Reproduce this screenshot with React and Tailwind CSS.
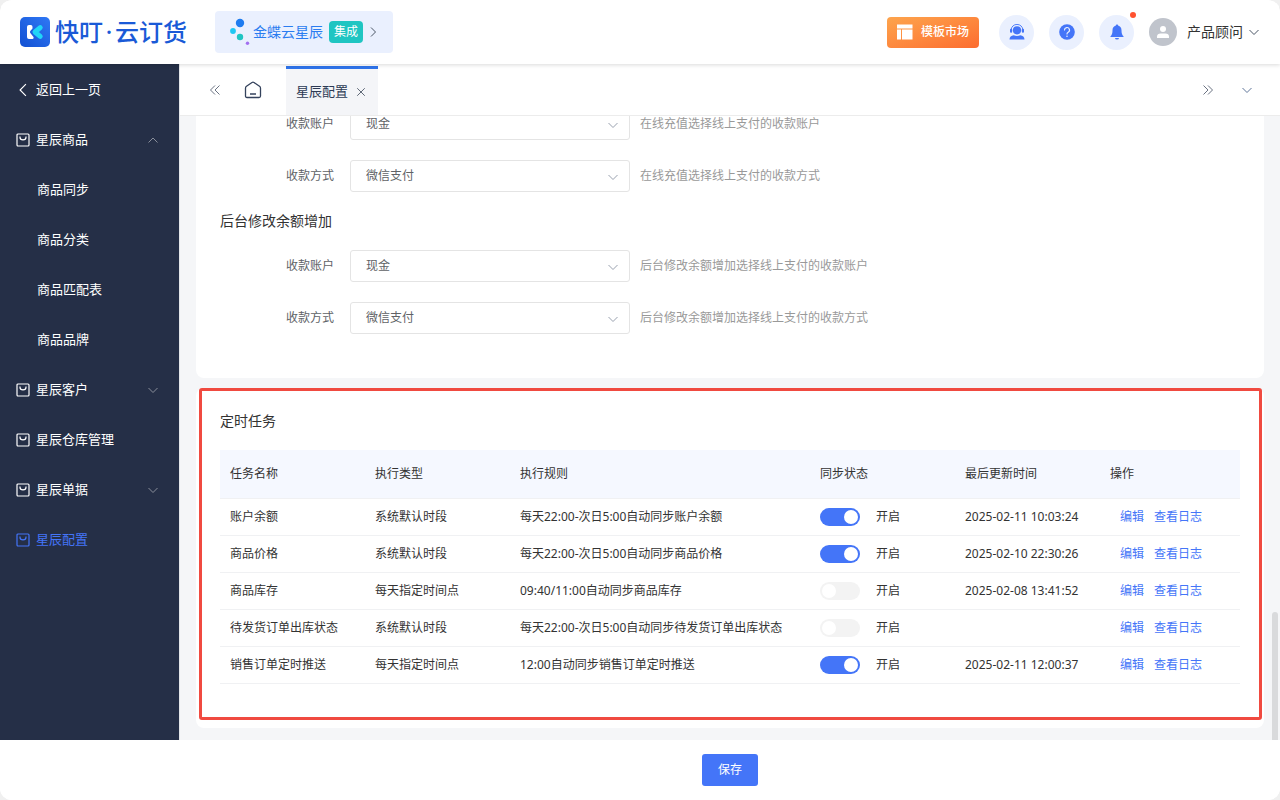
import { useState } from 'react';
import { X } from 'lucide-react';

const menu = [
  { label: '星辰商品', open: true, children: ['商品同步', '商品分类', '商品匹配表', '商品品牌'] },
  { label: '星辰客户', open: false, children: [] },
  { label: '星辰仓库管理' },
  { label: '星辰单据', open: false, children: [] },
  { label: '星辰配置', active: true },
];

const initialTasks = [
  { name: '账户余额', type: '系统默认时段', rule: '每天22:00-次日5:00自动同步账户余额', on: true, time: '2025-02-11 10:03:24' },
  { name: '商品价格', type: '系统默认时段', rule: '每天22:00-次日5:00自动同步商品价格', on: true, time: '2025-02-10 22:30:26' },
  { name: '商品库存', type: '每天指定时间点', rule: '09:40/11:00自动同步商品库存', on: false, time: '2025-02-08 13:41:52' },
  { name: '待发货订单出库状态', type: '系统默认时段', rule: '每天22:00-次日5:00自动同步待发货订单出库状态', on: false, time: '' },
  { name: '销售订单定时推送', type: '每天指定时间点', rule: '12:00自动同步销售订单定时推送', on: true, time: '2025-02-11 12:00:37' },
];

const chevrons = {
  down: 'M1.5 4L6 8.5 10.500 4',
  up: 'M1.5 8.5L6 4l4.5 4.5',
  left: 'M8.5 1l-5 5 5 5',
  right: 'M4 1.5L8.5 6 4 10.5',
  doubleLeft: 'M6 1.5L1.5 6 6 10.5M10.5 1.5L6 6l4.5 4.5',
  doubleRight: 'M1.5 1.5L6 6l-4.5 4.5M6 1.5L10.5 6 6 10.5',
};

function Chevron({ dir, className }) {
  return (
    <svg viewBox="0 0 12 12" className={className} fill="none" stroke="currentColor" strokeWidth="1" aria-hidden="true">
      <path d={chevrons[dir]} />
    </svg>
  );
}

function Logo() {
  return (
    <svg viewBox="0 0 30 30" className="h-[30px] w-[30px]" aria-hidden="true">
      <defs>
        <linearGradient id="logoBg" x1="0" y1="1" x2="1" y2="0">
          <stop offset="0" stopColor="#1250d2" />
          <stop offset="1" stopColor="#2f78f5" />
        </linearGradient>
      </defs>
      <rect width="30" height="30" rx="5" fill="url(#logoBg)" />
      <path d="M9 8h1.8q1.7 0 1.7 1.7v1.8L10.3 14q-.7 1 0 2l3.2 4q.7 1.500-.8 2H9q-2 0-2-2V10q0-2 2-2z" fill="#fff" />
      <path d="M20.2 10.6L15 15l5.200 4.4" fill="none" stroke="#20d5f8" strokeWidth="5" strokeLinecap="round" strokeLinejoin="round" />
    </svg>
  );
}

function BagIcon() {
  return (
    <svg viewBox="0 0 14 14" className="h-3.5 w-3.5 shrink-0" fill="none" stroke="currentColor" strokeWidth="1.2" aria-hidden="true">
      <rect x="1" y="1" width="12" height="12" rx="1" />
      <path d="M4 3.6v.6a3 2.6 0 0 0 6 0v-.6" />
    </svg>
  );
}

function Header() {
  return (
    <header className="relative z-10 flex h-16 shrink-0 items-center bg-white px-5 shadow-[0_1px_4px_rgba(0,0,0,0.15)]">
      <div className="flex items-center gap-[5px]">
        <Logo />
        <span className="flex items-center text-2xl leading-8 font-medium text-[#1a5ad7]">
          快叮<span className="w-3 text-center">·</span>云订货
        </span>
      </div>

      <button type="button" className="ml-7 flex h-[42px] items-center rounded bg-[#eaf0fe] px-3.5 text-sm text-[#2a7cf0]">
        <svg viewBox="0 0 24 30" className="h-[30px] w-6" aria-hidden="true">
          <circle cx="11" cy="6" r="4.2" fill="#1f7cf0" />
          <circle cx="4" cy="14" r="2.9" fill="#1fc7f3" />
          <circle cx="11" cy="20" r="3.2" fill="#20c5c3" />
          <circle cx="18.5" cy="26.3" r="1.7" fill="#a26ff0" />
        </svg>
        <span>金蝶云星辰</span>
        <span className="ml-1.5 flex h-[22px] items-center rounded bg-[#1fc5c2] px-[5px] text-xs text-white">集成</span>
        <Chevron dir="right" className="ml-1 h-3 w-3 text-gray-600" />
      </button>

      <div className="ml-auto flex items-center">
        <button type="button" className="flex h-[31px] items-center gap-2 rounded bg-linear-to-br from-[#fda44d] to-[#fc6c2f] px-2.5 text-xs font-medium text-white">
          <svg viewBox="0 0 16 16" className="h-4 w-4" fill="currentColor" aria-hidden="true">
            <path d="M0 .5h15.5v4H0zM0 5.5h4v10H0zM5 5.5h10.5v10H5z" />
          </svg>
          模板市场
        </button>

        <div className="ml-5 flex items-center gap-[15px] text-[#4475f8]">
          <button type="button" aria-label="客服" className="flex h-[35px] w-[35px] items-center justify-center rounded-full bg-[#eaf0fe]">
            <svg viewBox="0 0 16 16" className="h-4 w-4" fill="currentColor" aria-hidden="true">
              <circle cx="8" cy="6.3" r="4.1" />
              <path d="M2.2 5.8a5.8 5.4 0 0 1 11.6 0" fill="none" stroke="currentColor" strokeWidth=".9" />
              <rect x="1" y="4.8" width="2.2" height="4" rx="1" />
              <rect x="12.8" y="4.8" width="2.2" height="4" rx="1" />
              <path d="M.5 15.5c0-2.8 1.7-4 4.2-4.300 2 1 4.6 1 6.6 0 2.5.3 4.2 1.5 4.2 4.300z" />
            </svg>
          </button>
          <button type="button" aria-label="帮助" className="flex h-[35px] w-[35px] items-center justify-center rounded-full bg-[#eaf0fe]">
            <svg viewBox="0 0 16 16" className="h-4 w-4" aria-hidden="true">
              <circle cx="8" cy="8" r="7.8" fill="currentColor" />
              <path d="M5.5 6a2.5 2.5 0 1 1 3.7 2.2c-.9.5-1.2.9-1.2 1.8" fill="none" stroke="#eaf0fe" strokeWidth="1.2" strokeLinecap="round" />
              <circle cx="8" cy="12.2" r=".8" fill="#eaf0fe" />
            </svg>
          </button>
          <button type="button" aria-label="通知" className="relative flex h-[35px] w-[35px] items-center justify-center rounded-full bg-[#eaf0fe]">
            <svg viewBox="0 0 16 16" className="h-4 w-4" fill="currentColor" aria-hidden="true">
              <path d="M8 .5c.7 0 1.1.5 1.1 1.1 2.2.6 3.4 2.3 3.4 4.6 0 3 .5 4.6 2 6v.8h-13v-.8c1.5-1.4 2-3 2-6 0-2.3 1.2-4 3.4-4.6C6.9 1 7.3.5 8 .5zM6 14h4a2 1.6 0 0 1-4 0z" />
            </svg>
            <span className="absolute -right-0.5 -top-[3px] h-1.5 w-1.5 rounded-full bg-[#ff5230]" />
          </button>
        </div>

        <button type="button" className="ml-[15px] flex items-center text-sm text-[#333]">
          <span className="mr-2.5 flex h-7 w-7 items-center justify-center rounded-full bg-[#c0c4cc]">
            <svg viewBox="0 0 14 14" className="h-3.5 w-3.5" fill="#fff" aria-hidden="true">
              <circle cx="7" cy="4" r="3" />
              <path d="M1 13v-1.500C1 9.500 2.500 8.500 4.500 8.500h5c2 0 3.500 1 3.500 3V13z" />
            </svg>
          </span>
          产品顾问
          <Chevron dir="down" className="ml-[5px] h-3 w-3 text-gray-600" />
        </button>
      </div>
    </header>
  );
}

function Sidebar() {
  return (
    <aside className="w-[179px] shrink-0 overflow-hidden bg-[#252f47] pt-px text-[13px] text-white">
      <a href="#back" className="flex h-[50px] items-center gap-1.5 pl-4">
        <Chevron dir="left" className="h-3.5 w-3.5" />
        返回上一页
      </a>
      <nav>
        {menu.map((item) => (
          <div key={item.label}>
            <a href="#menu" className={item.active ? 'flex h-[50px] items-center gap-1.5 pl-4 pr-5 text-[#4475f8]' : 'flex h-[50px] items-center gap-1.5 pl-4 pr-5'}>
              <BagIcon />
              {item.label}
              {item.children && <Chevron dir={item.open ? 'up' : 'down'} className="ml-auto h-3 w-3 text-[#8a8f9b]" />}
            </a>
            {item.open && item.children.map((child) => (
              <a key={child} href="#child" className="flex h-[50px] items-center pl-[37px]">{child}</a>
            ))}
          </div>
        ))}
      </nav>
    </aside>
  );
}

function TabBar() {
  return (
    <div className="flex h-[52px] shrink-0 items-center border-b border-[#ececec] bg-white pr-[27px] pl-[29px]">
      <button type="button" aria-label="向左" className="text-gray-500">
        <Chevron dir="doubleLeft" className="h-3 w-3" />
      </button>
      <button type="button" aria-label="首页" className="ml-[23px] text-[#34425c]">
        <svg viewBox="0 0 18 18" className="h-[18px] w-[18px]" fill="none" stroke="currentColor" strokeWidth="1.3" strokeLinejoin="round" aria-hidden="true">
          <path d="M1.5 7.2Q1.5 6 2.5 5.3L8 1.5q1-.6 2 0l5.5 3.8q1 .7 1 1.9V15q0 1.5-1.5 1.5H3q-1.500 0-1.500-1.500z" />
          <path d="M6 13h6" />
        </svg>
      </button>
      <div className="ml-6 flex h-[49px] items-center gap-1.5 self-end border-t-[3px] border-[#2f74ea] bg-[#f4f5f8] px-2.5 text-[13px] text-[#2c3a55]">
        星辰配置
        <button type="button" aria-label="关闭" className="text-gray-600">
          <X className="h-3.5 w-3.5" strokeWidth={1.5} />
        </button>
      </div>
      <button type="button" aria-label="向右" className="ml-auto text-gray-500">
        <Chevron dir="doubleRight" className="h-3 w-3" />
      </button>
      <button type="button" aria-label="更多" className="ml-[27px] text-[#60769a]">
        <Chevron dir="down" className="h-3 w-3" />
      </button>
    </div>
  );
}

function SelectRow({ id, label, value, hint }) {
  return (
    <div className="flex h-8 items-center text-xs">
      <label htmlFor={id} className="mr-4 w-[114px] text-right text-[#606266]">{label}</label>
      <div className="relative">
        <select id={id} defaultValue={value} className="h-8 w-[280px] appearance-none rounded-[3px] border border-[#e4e4e4] bg-white pl-[15px] text-[#606266]">
          <option>{value}</option>
        </select>
        <Chevron dir="down" className="pointer-events-none absolute right-[11px] top-[11px] h-3 w-3 text-gray-400" />
      </div>
      <span className="ml-2.5 text-[#999]">{hint}</span>
    </div>
  );
}

function TaskTable() {
  const [tasks, setTasks] = useState(initialTasks);

  const toggle = (name) => {
    setTasks(tasks.map((t) => (t.name === name ? { ...t, on: !t.on } : t)));
  };

  return (
    <table className="mt-[19px] w-full table-fixed text-left text-xs text-[#333]">
      <thead>
        <tr className="h-12 border-b border-[#f0f1f3] bg-[#f5f8ff]">
          <th className="w-[145px] px-2.5 font-normal">任务名称</th>
          <th className="w-[145px] px-2.5 font-normal">执行类型</th>
          <th className="px-2.5 font-normal">执行规则</th>
          <th className="w-[145px] px-2.5 font-normal">同步状态</th>
          <th className="w-[145px] px-2.5 font-normal">最后更新时间</th>
          <th className="w-[140px] px-2.5 font-normal">操作</th>
        </tr>
      </thead>
      <tbody>
        {tasks.map((task) => (
          <tr key={task.name} className="h-[37px] border-b border-[#f0f1f3] whitespace-nowrap">
            <td className="px-2.5">{task.name}</td>
            <td className="px-2.5">{task.type}</td>
            <td className="px-2.5">{task.rule}</td>
            <td className="px-2.5">
              <label className="flex items-center gap-4">
                <input
                  type="checkbox"
                  role="switch"
                  checked={task.on}
                  onChange={() => toggle(task.name)}
                  className="flex h-[18px] w-10 appearance-none items-center rounded-full bg-[#f3f3f3] px-0.5 before:h-3.5 before:w-3.5 before:rounded-full before:bg-white checked:justify-end checked:bg-[#4475f8]"
                />
                开启
              </label>
            </td>
            <td className="px-2.5">{task.time}</td>
            <td className="px-5 text-[#4475f8]">
              <div className="flex gap-2.5">
                <a href="#edit">编辑</a>
                <a href="#log">查看日志</a>
              </div>
            </td>
          </tr>
        ))}
      </tbody>
    </table>
  );
}

export default function App() {
  return (
    <div className="h-screen bg-[#f0f0f0]">
      <div className="flex h-full flex-col overflow-hidden rounded-xl bg-white font-['Noto_Sans','Noto_Sans_CJK_SC',sans-serif]">
        <Header />
        <div className="flex min-h-0 flex-1">
          <Sidebar />
          <div className="flex min-w-0 flex-1 flex-col border-l border-[#e4e6ea] bg-[#f5f6f8]">
            <TabBar />
            <main className="relative min-h-0 flex-1 overflow-hidden px-4">
              {/* content sits slightly scrolled under the tab bar */}
              <section className="-mt-2 rounded-b-lg bg-white px-6 pb-11">
                <div className="flex flex-col gap-5">
                  <SelectRow id="rechargeAccount" label="收款账户" value="现金" hint="在线充值选择线上支付的收款账户" />
                  <SelectRow id="rechargeMethod" label="收款方式" value="微信支付" hint="在线充值选择线上支付的收款方式" />
                </div>
                <h2 className="my-[19px] text-sm leading-5 text-[#333]">后台修改余额增加</h2>
                <div className="flex flex-col gap-5">
                  <SelectRow id="balanceAccount" label="收款账户" value="现金" hint="后台修改余额增加选择线上支付的收款账户" />
                  <SelectRow id="balanceMethod" label="收款方式" value="微信支付" hint="后台修改余额增加选择线上支付的收款方式" />
                </div>
              </section>

              <section className="relative mt-2.5 rounded-lg bg-white px-6 pb-11 pt-[23px]">
                <h2 className="text-sm leading-5 text-[#333]">定时任务</h2>
                <TaskTable />
                {/* highlight frame */}
                <div className="pointer-events-none absolute bottom-2 left-[3px] right-0.5 top-0 rounded-[3px] border-[3px] border-[#f04a40]" />
              </section>

              <div className="absolute bottom-0 right-0.5 h-32 w-1.5 rounded-t-full bg-[#d9dadc]" />
            </main>
          </div>
        </div>
        <footer className="flex h-[60px] shrink-0 items-center justify-center bg-white pl-[180px]">
          <button type="button" className="h-8 rounded-[3px] bg-[#4475f8] px-4 text-xs text-white">保存</button>
        </footer>
      </div>
    </div>
  );
}
